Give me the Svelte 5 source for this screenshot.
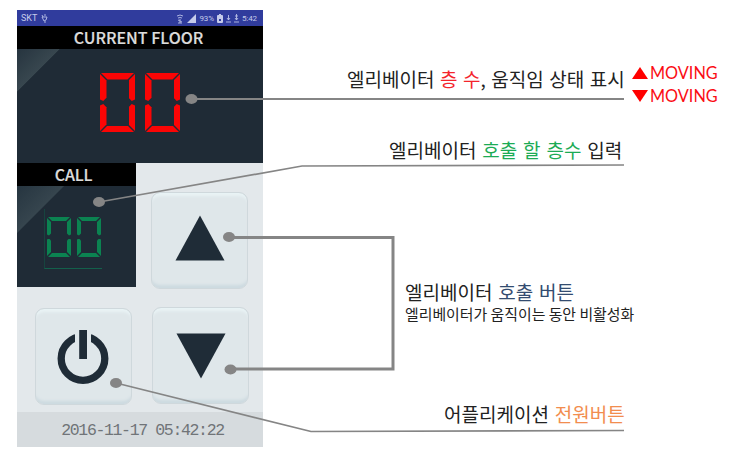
<script>
  const current = ['0', '0'];
  const called = ['0', '0'];
  const lit = {
    0: ['a', 'b', 'c', 'd', 'e', 'f']
  };
</script>

{#snippet led(digits, kind)}
  <div class="led {kind}" role="img" aria-label={digits.join('')}>
    {#each digits as digit}
      <div class="digit">
        {#each lit[digit] as segment}
          <i class={segment}></i>
        {/each}
      </div>
    {/each}
  </div>
{/snippet}

<main>
  <section class="phone">
    <header class="status">
      <span>SKT</span>
      <svg class="plug" width="7" height="9" viewBox="0 0 7 9"><path d="M1 1l1 2M4 0v2M1 3h5l-1 3-2 1zM4 7v2" /></svg>
      <span class="push"></span>
      <svg width="8" height="10" viewBox="0 0 8 10"><path d="M1 2q3-2 6 0M2 4q2-1 4 0M4 5v4M2 9h4M2 6l4 2" /></svg>
      <svg class="signal" width="9" height="9" viewBox="0 0 9 9"><path d="M0 9L9 0v9z" /></svg>
      <span class="tiny">93%</span>
      <svg class="battery" width="6" height="9" viewBox="0 0 6 9"><path d="M1 1h1V0h2v1h1q1 0 1 1v6q0 1-1 1H1q-1 0-1-1V2q0-1 1-1z" /><path class="bolt" d="M2 5h2v2H2z" /></svg>
      <svg width="5" height="9" viewBox="0 0 5 9"><path d="M2.500 1v5M1 4l1.500 2L4 4M0 8h5" /></svg>
      <svg width="5" height="9" viewBox="0 0 5 9"><path d="M2.500 0v6M1 2h3M1 4l1.500 2L4 4M0 8h5" /></svg>
      <span class="tiny">5:42</span>
    </header>
    <h1>CURRENT FLOOR</h1>
    <div class="screen floor">{@render led(current, 'red')}</div>
    <div class="pad">
      <div class="call">
        <h2>CALL</h2>
        <div class="screen target">
          <div class="field">{@render led(called, 'green')}</div>
        </div>
      </div>
      <button class="up" aria-label="Up">
        <svg width="50" height="46" viewBox="0 0 50 46"><path d="M25 .5L49.500 45.500H.5z" /></svg>
      </button>
      <button class="power" aria-label="Power">
        <svg width="52" height="55" viewBox="0 0 52 55">
          <circle class="ring" cx="26" cy="29.500" r="21.800" />
          <path class="gap" d="M18 0h16v20H18z" />
          <path d="M22.200 1h7.800v29h-7.800z" />
        </svg>
      </button>
      <button class="dn" aria-label="Down">
        <svg width="50" height="46" viewBox="0 0 50 46"><path d="M.5 .5h49L25 45.500z" /></svg>
      </button>
    </div>
    <footer><time>2016-11-17 05:42:22</time></footer>
  </section>

  <section class="notes">
    <div class="first">
      <p>엘리베이터 <b class="r">층 수</b>, 움직임 상태 표시</p>
      <div class="moving">
        <div><svg width="16" height="12" viewBox="0 0 16 12"><path d="M8 0l8 12H0z" /></svg><span>MOVING</span></div>
        <div><svg width="16" height="12" viewBox="0 0 16 12"><path d="M0 0h16L8 12z" /></svg><span>MOVING</span></div>
      </div>
    </div>
    <p class="second">엘리베이터 <b class="g">호출 할 층수</b> 입력</p>
    <div class="third">
      <p>엘리베이터 <b class="n">호출 버튼</b></p>
      <p class="small">엘리베이터가 움직이는 동안 비활성화</p>
    </div>
    <p class="fourth">어플리케이션 <b class="o">전원버튼</b></p>
  </section>

  <svg class="links" width="729" height="461" viewBox="0 0 729 461">
    <path d="M192 99H624" />
    <path class="fine" d="M99 202L302 166L624 165" />
    <path class="thick" d="M229 237.500H393V369H230" />
    <path class="fine" d="M116 383L311 431.500L624 430.500" />
    <ellipse cx="191.500" cy="99" rx="6" ry="5" />
    <ellipse cx="99" cy="202" rx="6" ry="5" />
    <ellipse cx="229" cy="237" rx="6" ry="5" />
    <ellipse cx="230.500" cy="369.500" rx="6" ry="5" />
    <ellipse cx="116" cy="383" rx="6" ry="5" />
  </svg>
</main>

<style>
  :global(body) { margin: 0; background: #fff; }
  main {
    position: relative; width: 729px; height: 461px; display: flex;
    overflow: hidden; background: #fff;
    font-family: "Noto Sans CJK KR", sans-serif;
  }
  h1, h2, p { margin: 0; }
  b { font-weight: inherit; }
  .phone {
    width: 246px; height: 437px; margin: 10px 0 0 17px; flex: none;
    display: flex; flex-direction: column; background: #e3e8eb;
  }
  .status {
    height: 16px; box-sizing: border-box; padding: 1px 6px 0 4px; display: flex;
    align-items: center; gap: 3px; background: #303c9d; color: #c5cbea;
    font: 9px/15px Roboto, sans-serif;
  }
  .status svg { fill: none; stroke: #b9c0e6; stroke-width: .9; }
  .status .plug { margin-left: 1px; }
  .status .signal, .status .battery { fill: #c5cbea; stroke: none; }
  .status .bolt { fill: #303c9d; }
  .push { flex: 1; }
  .tiny { font-size: 8px; letter-spacing: -.1px; }
  h1, h2 {
    height: 23px; background: #000; color: #dcdcdc; text-align: center;
    font: 500 16px/22px "Noto Sans CJK KR", sans-serif;
    -webkit-text-stroke: .2px #dcdcdc;
  }
  h1 { padding-right: 3px; }
  h2 { letter-spacing: -.2px; padding-right: 6px; }
  .screen { background: #1f2b36; }
  .floor {
    height: 114px; display: flex; padding: 24px 0 0 83px; box-sizing: border-box;
    background: linear-gradient(135deg, #26343f 0, #38474f 30px, transparent 30.500px), #1f2b36;
  }
  .led { display: flex; }
  .digit { position: relative; width: 35px; height: 59px; --t: 6.500px; }
  .red { gap: 10px; color: #fb0505; }
  .digit i { position: absolute; background: currentColor; }
  .a, .d { left: 1px; right: 1px; height: var(--t); }
  .a { top: 0; clip-path: polygon(0 0, 100% 0, calc(100% - var(--t)) 100%, var(--t) 100%); }
  .d { bottom: 0; clip-path: polygon(var(--t) 0, calc(100% - var(--t)) 0, 100% 100%, 0 100%); }
  .b, .c, .e, .f { width: var(--t); height: calc(50% - 2.500px); }
  .b, .f { top: 1px; }
  .c, .e { bottom: 1px; }
  .b, .c { right: 0; }
  .e, .f { left: 0; }
  .f { clip-path: polygon(0 0, 100% var(--t), 100% 88%, 50% 100%, 0 94%); }
  .b { clip-path: polygon(100% 0, 100% 94%, 50% 100%, 0 88%, 0 var(--t)); }
  .e { clip-path: polygon(0 6%, 50% 0, 100% 12%, 100% calc(100% - var(--t)), 0 100%); }
  .c { clip-path: polygon(100% 6%, 50% 0, 0 12%, 0 calc(100% - var(--t)), 100% 100%); }
  .green { gap: 6px; color: #0b8351; }
  .green .digit { width: 24px; height: 40px; --t: 4px; }
  .pad { height: 249px; display: grid; grid-template: 125px 124px / 119px 127px; }
  .target {
    height: 101px; display: flex; padding: 23px 0 0 27px; box-sizing: border-box;
    background: linear-gradient(135deg, #263540 0, #36454e 33px, transparent 33.500px), #1f2b36;
  }
  .field {
    width: 58px; height: 60px; box-sizing: border-box; padding: 8px 0 0 2px;
    border-left: 1px solid #17443f; border-bottom: 1px solid #13604b;
  }
  button {
    width: 97px; height: 97px; box-sizing: border-box; padding: 0; display: flex;
    justify-content: center; align-items: center; border: 1.500px solid #cfd8dc;
    border-radius: 9px; background: #dfe7ea;
    box-shadow: inset 0 5px 3px -2px #e9f3f5, inset 0 -5px 3px -2px #cddae0;
  }
  button svg { fill: #1f2c37; }
  .up { margin: 29px 0 0 15px; padding-bottom: 6px; }
  .power { margin: 20px 0 0 18px; padding-right: 2px; }
  .dn { margin: 19px 0 0 16px; }
  .ring { fill: none; stroke: #1f2c37; stroke-width: 7.300; }
  .gap { fill: #dfe7ea; }
  footer {
    height: 35px; display: flex; justify-content: center; align-items: center;
    box-sizing: border-box; padding-left: 5px;
    background: #d6dbde; color: #707478;
    font: 16.500px/32px "Liberation Mono", monospace;
  }
  time { white-space: nowrap; letter-spacing: -1.350px; padding-top: 3px; }
  .notes { flex: 1; color: #222; font-size: 19px; line-height: 26px; white-space: nowrap; word-spacing: 1.600px; }
  .first { display: flex; height: 44px; margin: 62px 0 0 84px; gap: 6px; }
  .first p { width: 279px; padding-top: 4px; word-spacing: 1.300px; }
  .moving { display: flex; flex-direction: column; margin-top: -1px; color: #fb0d14; font: 16.300px/23px Lato, sans-serif; }
  .moving div { display: flex; align-items: center; gap: 2px; }
  .moving svg { fill: #f00; }
  .second { margin: 31px 0 0 126px; }
  .third { margin: 116px 0 0 142px; }
  .small { font-size: 14.900px; line-height: 18px; word-spacing: 0; }
  .fourth { margin: 78px 0 0 181px; }
  .r { color: #f4242c; }
  .g { color: #1cab55; }
  .n { color: #334c70; }
  .o { color: #f28d4f; }
  .links { position: absolute; inset: 0; pointer-events: none; fill: #858585; }
  .links path { fill: none; stroke: #858585; stroke-width: 2.200; }
  .links .fine { stroke-width: 1.700; }
  .links .thick { stroke-width: 3; }
</style>
